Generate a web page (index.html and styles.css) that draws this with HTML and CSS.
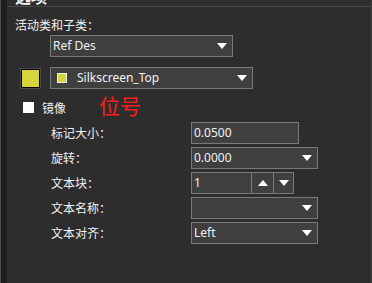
FILE: index.html
```html
<!DOCTYPE html>
<html lang="zh-CN">
<head>
    <meta charset="UTF-8">
    <meta name="viewport" content="width=device-width, initial-scale=1.0">
    <title>Options</title>
    <link rel="stylesheet" href="styles.css">
</head>
<body>

    <div class="window">
        <div class="edge"></div>
        <div class="panel">
            <div class="panel-title"><span>选项</span></div>

            <div class="panel-body">
                <div class="section-label">活动类和子类：</div>
                <div class="combo combo-class">
                    <span class="combo-text">Ref Des</span>
                    <svg class="arrow" width="10" height="6" viewBox="0 0 10 6"><path d="M0 0H10L5 6Z" fill="#fff"/></svg>
                </div>

                <div class="layer-row">
                    <div class="swatch"></div>
                    <div class="combo combo-layer">
                        <span class="mini-swatch"></span>
                        <span class="combo-text">Silkscreen_Top</span>
                        <svg class="arrow" width="10" height="6" viewBox="0 0 10 6"><path d="M0 0H10L5 6Z" fill="#fff"/></svg>
                    </div>
                </div>

                <div class="check-row">
                    <span class="checkbox"></span>
                    <span class="check-label">镜像</span>
                    <span class="note">位号</span>
                </div>

                <div class="form">
                    <label>标记大小：</label>
                    <div class="field field-input"><span class="combo-text">0.0500</span></div>

                    <label>旋转：</label>
                    <div class="field combo">
                        <span class="combo-text">0.0000</span>
                        <svg class="arrow" width="10" height="6" viewBox="0 0 10 6"><path d="M0 0H10L5 6Z" fill="#fff"/></svg>
                    </div>

                    <label>文本块：</label>
                    <div class="field spin">
                        <span class="combo-text">1</span>
                        <span class="spin-btn"><svg width="10" height="6" viewBox="0 0 10 6"><path d="M0 6H10L5 0Z" fill="#fff"/></svg></span>
                        <span class="spin-btn"><svg width="10" height="6" viewBox="0 0 10 6"><path d="M0 0H10L5 6Z" fill="#fff"/></svg></span>
                    </div>

                    <label>文本名称：</label>
                    <div class="field combo">
                        <span class="combo-text"></span>
                        <svg class="arrow" width="10" height="6" viewBox="0 0 10 6"><path d="M0 0H10L5 6Z" fill="#fff"/></svg>
                    </div>

                    <label>文本对齐：</label>
                    <div class="field combo">
                        <span class="combo-text">Left</span>
                        <svg class="arrow" width="10" height="6" viewBox="0 0 10 6"><path d="M0 0H10L5 6Z" fill="#fff"/></svg>
                    </div>
                </div>
            </div>
        </div>
    </div>

</body>
</html>
```

FILE: styles.css
```css
* {
    margin: 0;
    padding: 0;
    box-sizing: border-box;
}

body {
    background-color: #2d2d2d;
    color: #f2f2f2;
    font-family: 'Noto Sans', 'Noto Sans CJK SC', sans-serif;
    font-size: 12px;
    overflow: hidden;
}

.window {
    display: flex;
    height: 283px;
}

.edge {
    width: 7px;
    background-color: #1f1f1f;
    border-left: 1px solid #4c4c4c;
}

.panel {
    flex: 1;
    border-right: 1px solid #3a3a3a;
}

.panel-title {
    height: 7px;
    overflow: hidden;
    border-bottom: 1px solid #4a4a4a;
    padding-left: 8px;
}

.panel-title span {
    display: block;
    margin-top: -14px;
    font-size: 16px;
    line-height: 20px;
    font-weight: bold;
    font-family: 'Noto Sans CJK SC', sans-serif;
}

.panel-body {
    padding: 10px 0 0 8px;
}

.section-label {
    font-family: 'Noto Sans CJK SC', sans-serif;
    line-height: 16px;
}

.combo {
    display: flex;
    align-items: center;
    height: 22px;
    background-color: #3f3f3f;
    border: 1px solid #7a7a7a;
    padding: 0 5px 0 2px;
}

.combo-text {
    flex: 1;
    line-height: 20px;
    white-space: nowrap;
}

.combo-class {
    width: 183px;
    margin: 2px 0 0 35px;
}

.layer-row {
    display: flex;
    align-items: center;
    margin-top: 10px;
}

.swatch {
    width: 19px;
    height: 19px;
    margin-left: 6px;
    background-color: #d6d63c;
    border: 1px solid #000;
    outline: 1px solid #4a4a4a;
    outline-offset: 0;
}

.combo-layer {
    width: 203px;
    margin-left: 10px;
    padding-left: 6px;
}

.mini-swatch {
    width: 10px;
    height: 10px;
    margin-right: 10px;
    background-color: #d6d63c;
    border: 1px solid #f2f2f2;
}

.check-row {
    display: flex;
    align-items: center;
    height: 28px;
    margin-top: 2px;
}

.checkbox {
    width: 11px;
    height: 11px;
    margin: 5px 0 0 8px;
    background-color: #fff;
}

.check-label {
    margin: 5px 0 0 8px;
    font-family: 'Noto Sans CJK SC', sans-serif;
}

.note {
    margin-left: 33px;
    font-family: 'Noto Sans CJK SC', sans-serif;
    font-size: 21px;
    color: #ff1c1c;
}

.form {
    display: grid;
    grid-template-columns: 140px auto;
    row-gap: 3px;
    margin: 3px 0 0 36px;
}

.form label {
    font-family: 'Noto Sans CJK SC', sans-serif;
    line-height: 22px;
}

.field {
    height: 22px;
    width: 127px;
}

.field-input {
    width: 108px;
    display: flex;
    align-items: center;
    background-color: #3f3f3f;
    border: 1px solid #7a7a7a;
    padding-left: 2px;
}

.spin {
    width: 103px;
    display: flex;
    align-items: center;
    background-color: #3f3f3f;
    border: 1px solid #7a7a7a;
    padding-left: 2px;
}

.spin-btn {
    display: flex;
    align-items: center;
    justify-content: center;
    width: 22px;
    height: 20px;
    border-left: 1px solid #7a7a7a;
}

.spin-btn:last-child {
    width: 20px;
}
```
